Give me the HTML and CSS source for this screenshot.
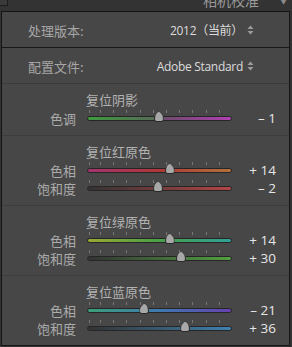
FILE: index.html
```html
<!DOCTYPE html>
<html lang="zh">
<head>
    <meta charset="UTF-8">
    <title>相机校准</title>
    <link rel="stylesheet" href="styles.css">
</head>
<body>
<div class="top">
    <span class="check"></span>
    <span class="head-title">相机校准</span>
    <span class="head-arrow">▼</span>
</div>
<div class="panel">
    <div class="row version">
        <span class="row-label">处理版本:</span>
        <span class="row-value">2012（当前）
            <svg class="updown" width="7" height="10" viewBox="0 0 7 10"><path d="M3.5 0.5L6.5 4H0.5Z M3.5 9.5L6.5 6H0.5Z" fill="#9c9c9c"/></svg>
        </span>
    </div>
    <div class="row profile">
        <span class="row-label">配置文件:</span>
        <span class="row-value">Adobe Standard
            <svg class="updown" width="7" height="10" viewBox="0 0 7 10"><path d="M3.5 0.5L6.5 4H0.5Z M3.5 9.5L6.5 6H0.5Z" fill="#9c9c9c"/></svg>
        </span>
    </div>

    <div class="section">
        <div class="sec-title">复位阴影</div>
        <div class="slider">
            <span class="s-label">色调</span>
            <div class="track t-tint"><i class="ticks"></i><b class="thumb" style="left:49.5%"></b></div>
            <span class="s-value">– 1</span>
        </div>
    </div>

    <div class="section">
        <div class="sec-title">复位红原色</div>
        <div class="slider">
            <span class="s-label">色相</span>
            <div class="track t-red-hue"><i class="ticks"></i><b class="thumb" style="left:57%"></b></div>
            <span class="s-value">+ 14</span>
        </div>
        <div class="slider">
            <span class="s-label">饱和度</span>
            <div class="track t-red-sat"><i class="ticks"></i><b class="thumb" style="left:49%"></b></div>
            <span class="s-value">– 2</span>
        </div>
    </div>

    <div class="section">
        <div class="sec-title">复位绿原色</div>
        <div class="slider">
            <span class="s-label">色相</span>
            <div class="track t-green-hue"><i class="ticks"></i><b class="thumb" style="left:57%"></b></div>
            <span class="s-value">+ 14</span>
        </div>
        <div class="slider">
            <span class="s-label">饱和度</span>
            <div class="track t-green-sat"><i class="ticks"></i><b class="thumb" style="left:65%"></b></div>
            <span class="s-value">+ 30</span>
        </div>
    </div>

    <div class="section last">
        <div class="sec-title">复位蓝原色</div>
        <div class="slider">
            <span class="s-label">色相</span>
            <div class="track t-blue-hue"><i class="ticks"></i><b class="thumb" style="left:39.5%"></b></div>
            <span class="s-value">– 21</span>
        </div>
        <div class="slider">
            <span class="s-label">饱和度</span>
            <div class="track t-blue-sat"><i class="ticks"></i><b class="thumb" style="left:68%"></b></div>
            <span class="s-value">+ 36</span>
        </div>
    </div>
</div>
</body>
</html>
```

FILE: styles.css
```css
*{
    margin: 0;
    padding: 0;
    box-sizing: border-box;
}
body{
    width: 292px;
    height: 347px;
    background: #333;
    font-family: "Noto Sans CJK SC", "Noto Sans", sans-serif;
    font-size: 12px;
    color: #a9a9a9;
    overflow: hidden;
}
.top{
    height: 11px;
    position: relative;
    overflow: hidden;
}
.top .check{
    position: absolute;
    left: -2px;
    top: -6px;
    width: 10px;
    height: 12px;
    border: 1px solid #1c1c1c;
    background: #3a3a3a;
}
.top .head-title{
    position: absolute;
    left: 203px;
    top: -9px;
    font-size: 14px;
    line-height: 18px;
    color: #9a9a9a;
}
.top .head-arrow{
    position: absolute;
    left: 280px;
    top: -4px;
    font-size: 7px;
    line-height: 10px;
    color: #8a8a8a;
}
.panel{
    margin: 0 2px 0 1px;
    height: 335px;
    background: #474747;
    border: 1px solid #151515;
}
.row{
    display: flex;
    align-items: center;
    justify-content: space-between;
    height: 36px;
    padding: 0 35px 0 26px;
}
.row.version{
    border-bottom: 1px solid #181818;
    padding-top: 1px;
}
.row.profile{
    border-bottom: 1px solid #3b3b3b;
    padding-top: 1px;
}
.row-label{
    font-size: 13px;
    color: #a6a6a6;
}
.row-value{
    font-family: "Open Sans", "Noto Sans CJK SC", sans-serif;
    font-size: 12px;
    letter-spacing: -0.3px;
    color: #dcdcdc;
    display: flex;
    align-items: center;
}
.row-value .updown{
    margin-left: 4px;
}
.section{
    padding: 6px 13px 8px 0;
    border-bottom: 1px solid #3d3d3d;
}
.section.last{
    border-bottom: none;
}
.sec-title{
    height: 19px;
    line-height: 19px;
    padding-left: 84px;
    font-size: 13px;
    color: #b2b2b2;
}
.slider{
    display: flex;
    align-items: center;
    height: 18px;
}
.s-label{
    width: 75px;
    text-align: right;
    font-size: 13px;
    color: #ababab;
    padding-right: 1px;
}
.track{
    position: relative;
    margin-left: 10px;
    width: 145px;
    height: 5px;
    border: 1px solid #262626;
    border-radius: 3px;
    margin-top: 1px;
}
.ticks{
    position: absolute;
    left: 0;
    right: 0;
    top: -7px;
    height: 3px;
    background: repeating-linear-gradient(90deg, #777 0, #777 1px, transparent 1px, transparent 13.2px);
    background-position: 12px 0;
}
.thumb{
    position: absolute;
    top: -6px;
    width: 10px;
    height: 11px;
    margin-left: -5px;
    background: #a8a8a8;
    border: 1px solid #2a2a2a;
    border-radius: 50% 50% 3px 3px / 80% 80% 3px 3px;
    clip-path: polygon(50% 0, 100% 55%, 100% 100%, 0 100%, 0 55%);
}
.s-value{
    flex: 1;
    text-align: right;
    font-family: "Open Sans", sans-serif;
    font-size: 13.5px;
    color: #e6e6e6;
}
.t-tint{
    background: linear-gradient(90deg, #3e9a3e, #586858 50%, #6a4d6a 50%, #b13fb1);
}
.t-red-hue{
    background: linear-gradient(90deg, #a5336f, #b03838 50%, #b2713a);
}
.t-red-sat{
    background: linear-gradient(90deg, #333, #b44545);
}
.t-green-hue{
    background: linear-gradient(90deg, #9aa832, #48a048 50%, #2fa098);
}
.t-green-sat{
    background: linear-gradient(90deg, #333, #52a040);
}
.t-blue-hue{
    background: linear-gradient(90deg, #3aa078, #4078b0 50%, #6640b0);
}
.t-blue-sat{
    background: linear-gradient(90deg, #333, #3f82b0);
}
```
